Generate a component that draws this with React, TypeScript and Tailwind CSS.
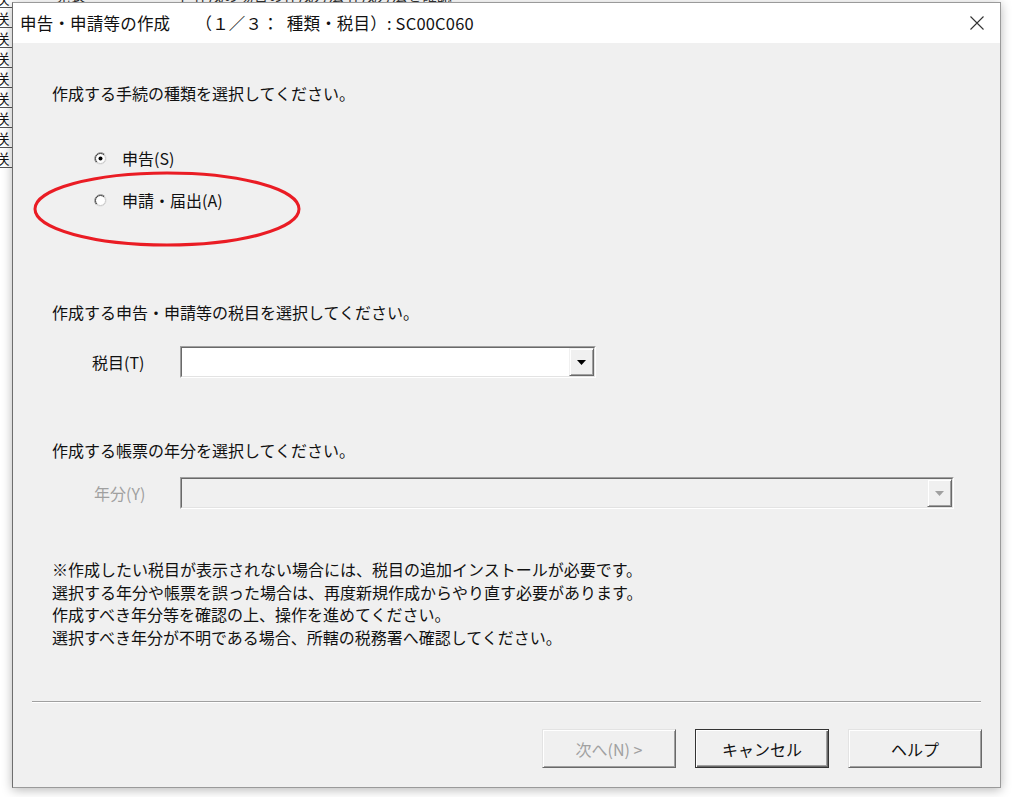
import React from "react";

function Radio({ checked }: { checked?: boolean }) {
  return (
    <svg width="13" height="13" viewBox="0 0 13 13" className="shrink-0">
      <circle cx="6.5" cy="6.5" r="6" fill="#fff" stroke="#ffffff" />
      <path d="M2.26 10.74 A6 6 0 0 1 10.74 2.26" fill="none" stroke="#8a8a8a" />
      <path d="M10.74 2.26 A6 6 0 0 1 2.26 10.74" fill="none" stroke="#dcdcdc" />
      <path d="M2.96 10.04 A5 5 0 0 1 10.04 2.96" fill="none" stroke="#404040" />
      <path d="M10.04 2.96 A5 5 0 0 1 2.96 10.04" fill="none" stroke="#c8c8c8" />
      {checked && <circle cx="6.5" cy="6.5" r="2" fill="#000" />}
    </svg>
  );
}

function Arrow({ color }: { color: string }) {
  return (
    <svg width="9" height="5" viewBox="0 0 9 5">
      <polygon points="0,0 9,0 4.5,5" fill={color} />
    </svg>
  );
}

function DropButton({ disabled }: { disabled?: boolean }) {
  return (
    <div className="flex h-full w-[25px] items-center justify-center border border-t-[#f0f0f0] border-l-[#f0f0f0] border-r-[#696969] border-b-[#696969] bg-[#f0f0f0] shadow-[inset_1px_1px_0_#ffffff,inset_-1px_-1px_0_#a0a0a0]">
      <Arrow color={disabled ? "#a0a0a0" : "#000000"} />
    </div>
  );
}

const raised =
  "border border-t-[#e3e3e3] border-l-[#e3e3e3] border-r-[#696969] border-b-[#696969] shadow-[inset_1px_1px_0_#ffffff,inset_-1px_-1px_0_#a0a0a0]";

export default function App() {
  const stripRows = Array.from({ length: 9 });
  return (
    <div className="relative h-[797px] w-[1024px] overflow-hidden bg-white font-['Noto_Sans_CJK_JP','Noto_Sans',sans-serif] text-black">
      {/* background spreadsheet strip */}
      <div className="absolute left-0 top-[-12px] flex w-[40px] flex-col">
        {stripRows.map((_, i) => (
          <div
            key={i}
            className="flex h-[20px] items-center border-b border-[#555] text-[14px] leading-none text-[#111]"
          >
            <span className="ml-[-3px]">关</span>
          </div>
        ))}
      </div>
      <div className="absolute left-[40px] top-[-13px] whitespace-nowrap text-[15px] leading-none text-[#333]">
        <span>一覧表</span>
        <span className="ml-[90px]">了 作成の場合の作成方法 作成方法を確認</span>
      </div>

      {/* dialog window */}
      <div className="absolute left-[12px] top-[2px] flex h-[786px] w-[989px] flex-col border border-[#9a9a9a] border-l-[#6e6e6e] bg-[#f0f0f0] shadow-[0_2px_10px_rgba(0,0,0,0.28)]">
        {/* title bar */}
        <div className="flex h-[40px] items-center justify-between bg-white pl-[7px] pr-[15px]">
          <div className="whitespace-nowrap text-[16.5px] leading-none tracking-[0.2px] text-[#111]">
            申告・申請等の作成　　（１／３：&nbsp;&nbsp;種類・税目）:&nbsp;SC00C060
          </div>
          <svg width="16" height="16" viewBox="0 0 16 16">
            <path d="M1.5 1.5 L14.5 14.5 M14.5 1.5 L1.5 14.5" stroke="#333" strokeWidth="1.1" fill="none" />
          </svg>
        </div>

        {/* body */}
        <div className="relative flex flex-1 flex-col pl-[39px] text-[16px] leading-[22px] text-[#111]">
          <svg
            className="pointer-events-none absolute left-[19px] top-[127px]"
            width="270"
            height="78"
            viewBox="0 0 270 78"
          >
            <ellipse cx="135" cy="39" rx="132" ry="36" fill="none" stroke="#ea1c24" strokeWidth="3" />
          </svg>

          <div className="mt-[39px] h-[22px]">作成する手続の種類を選択してください。</div>

          <div className="ml-[42px] mt-[43px] flex h-[22px] items-center gap-[15px]">
            <Radio checked />
            <span>申告(S)</span>
          </div>
          <div className="ml-[42px] mt-[20px] flex h-[22px] items-center gap-[15px]">
            <Radio />
            <span>申請・届出(A)</span>
          </div>

          <div className="mt-[90px] h-[22px]">作成する申告・申請等の税目を選択してください。</div>

          <div className="mt-[23px] flex h-[32px] items-center">
            <div className="w-[128px] pl-[40px]">税目(T)</div>
            <div className="flex h-[32px] w-[416px] border border-t-[#a0a0a0] border-l-[#a0a0a0] border-r-white border-b-white">
              <div className="flex flex-1 justify-end border border-t-[#696969] border-l-[#696969] border-r-[#e3e3e3] border-b-[#e3e3e3] bg-white">
                <DropButton />
              </div>
            </div>
          </div>

          <div className="mt-[61px] h-[22px]">作成する帳票の年分を選択してください。</div>

          <div className="mt-[16px] flex h-[32px] items-center">
            <div className="w-[128px] pl-[42px] text-[#a0a0a0]">年分(Y)</div>
            <div className="flex h-[32px] w-[774px] border border-t-[#a0a0a0] border-l-[#a0a0a0] border-r-white border-b-white">
              <div className="flex flex-1 justify-end border border-t-[#696969] border-l-[#696969] border-r-[#e3e3e3] border-b-[#e3e3e3] bg-[#f0f0f0]">
                <DropButton disabled />
              </div>
            </div>
          </div>

          <div className="mt-[49px] flex flex-col leading-[22.5px]">
            <div>※作成したい税目が表示されない場合には、税目の追加インストールが必要です。</div>
            <div>選択する年分や帳票を誤った場合は、再度新規作成からやり直す必要があります。</div>
            <div>作成すべき年分等を確認の上、操作を進めてください。</div>
            <div>選択すべき年分が不明である場合、所轄の税務署へ確認してください。</div>
          </div>

          <div className="ml-[-20px] mt-[53px] h-[2px] w-[949px] border-t border-b border-t-[#a0a0a0] border-b-white" />

          <div className="mt-[26px] flex justify-end gap-[19px] pr-[18px]">
            <div className={`flex h-[39px] w-[134px] items-center justify-center bg-[#f0f0f0] text-[#a0a0a0] ${raised}`}>
              次へ(N) &gt;
            </div>
            <div className="flex h-[39px] w-[134px] items-center justify-center border border-[#333] bg-[#f0f0f0] shadow-[inset_1px_1px_0_#ffffff,inset_-1px_-1px_0_#696969,inset_-2px_-2px_0_#a0a0a0]">
              キャンセル
            </div>
            <div className={`flex h-[39px] w-[134px] items-center justify-center bg-[#f0f0f0] ${raised}`}>
              ヘルプ
            </div>
          </div>
        </div>
      </div>
    </div>
  );
}
